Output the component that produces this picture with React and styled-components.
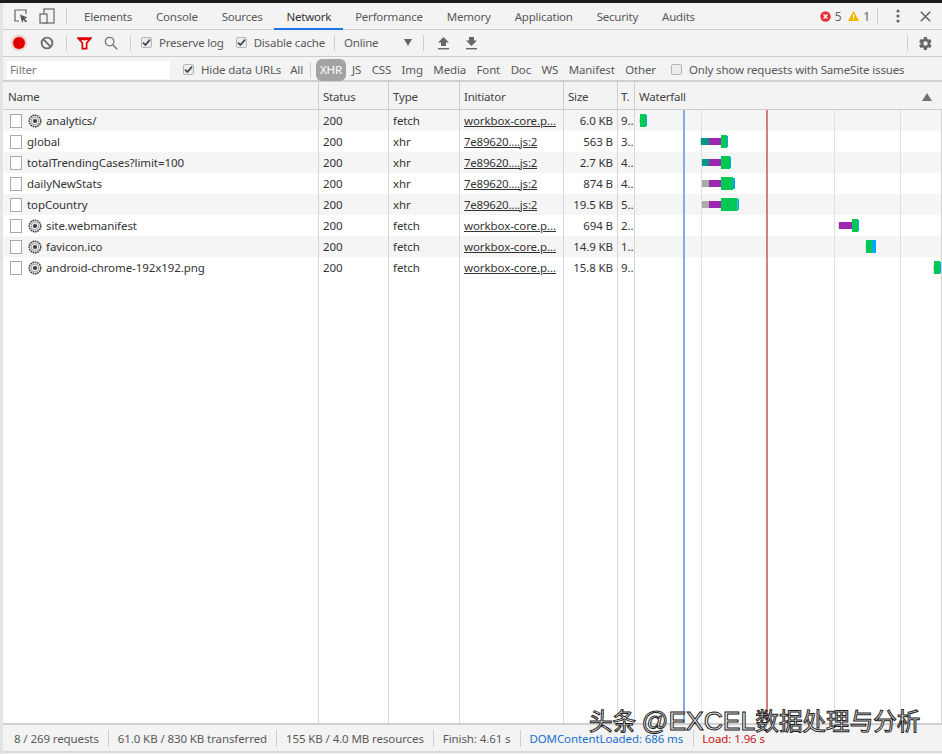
import styled, { createGlobalStyle } from "styled-components";

const GlobalStyle = createGlobalStyle`
  html, body {
    margin: 0;
    padding: 0;
    background: #fff;
  }
  * {
    box-sizing: border-box;
  }
`;

const COLUMNS = "316px 70px 71px 104px 54px 17px 1fr";

const TABS = [
  "Elements",
  "Console",
  "Sources",
  "Network",
  "Performance",
  "Memory",
  "Application",
  "Security",
  "Audits",
];

const TYPE_FILTERS = ["JS", "CSS", "Img", "Media", "Font", "Doc", "WS", "Manifest", "Other"];

const CORE = "workbox-core.p...";
const CHUNK = "7e89620....js:2";

const GREEN = "#00c853";
const BLUE = "#00a6ff";
const PURPLE = "#9c27b0";
const TEAL = "#009688";
const GRAY = "#aaaaaa";
const STUB = "#d8d8d8";

// x positions relative to the waterfall column, from the reference
const REQUESTS = [
  {
    name: "analytics/",
    worker: true,
    status: "200",
    type: "fetch",
    initiator: CORE,
    size: "6.0 KB",
    time: "9",
    bars: [
      [4, 1, STUB, 4],
      [5, 6, GREEN, 13],
      [11, 1, BLUE, 11],
    ],
  },
  {
    name: "global",
    status: "200",
    type: "xhr",
    initiator: CHUNK,
    size: "563 B",
    time: "3",
    bars: [
      [65, 1, STUB, 6],
      [66, 8, TEAL, 7],
      [74, 12, PURPLE, 7],
      [86, 6, GREEN, 13],
      [92, 1, BLUE, 11],
    ],
  },
  {
    name: "totalTrendingCases?limit=100",
    status: "200",
    type: "xhr",
    initiator: CHUNK,
    size: "2.7 KB",
    time: "4",
    bars: [
      [66, 1, STUB, 6],
      [67, 7, TEAL, 7],
      [74, 12, PURPLE, 7],
      [86, 9, GREEN, 13],
      [95, 1, BLUE, 11],
    ],
  },
  {
    name: "dailyNewStats",
    status: "200",
    type: "xhr",
    initiator: CHUNK,
    size: "874 B",
    time: "4",
    bars: [
      [66, 1, STUB, 6],
      [67, 7, GRAY, 7],
      [74, 12, PURPLE, 7],
      [86, 12, GREEN, 13],
      [98, 2, BLUE, 11],
    ],
  },
  {
    name: "topCountry",
    status: "200",
    type: "xhr",
    initiator: CHUNK,
    size: "19.5 KB",
    time: "5",
    bars: [
      [66, 1, STUB, 6],
      [67, 7, GRAY, 7],
      [74, 12, PURPLE, 7],
      [86, 16.5, GREEN, 13],
      [102.5, 1.5, BLUE, 11],
    ],
  },
  {
    name: "site.webmanifest",
    worker: true,
    status: "200",
    type: "fetch",
    initiator: CORE,
    size: "694 B",
    time: "2",
    bars: [
      [203, 1, STUB, 6],
      [204, 13, PURPLE, 7],
      [217, 6, GREEN, 13],
      [223, 1, BLUE, 11],
    ],
  },
  {
    name: "favicon.ico",
    worker: true,
    status: "200",
    type: "fetch",
    initiator: CORE,
    size: "14.9 KB",
    time: "1",
    bars: [
      [230, 1, STUB, 6],
      [231, 6, GREEN, 13],
      [237, 4, BLUE, 13],
    ],
  },
  {
    name: "android-chrome-192x192.png",
    worker: true,
    status: "200",
    type: "fetch",
    initiator: CORE,
    size: "15.8 KB",
    time: "9",
    bars: [
      [298, 1, STUB, 6],
      [299, 6, GREEN, 13],
      [305, 1, BLUE, 11],
    ],
  },
];

const InspectIcon = () => (
  <svg width="16" height="16" viewBox="0 0 16 16">
    <path d="M6 13H2V2h11v4" fill="none" stroke="#666" strokeWidth="1.2" />
    <path d="M7 6.5l7.5 3-3 1.2 2.6 2.6-1.2 1.2-2.6-2.6L9.2 15z" fill="#555" />
  </svg>
);

const DeviceIcon = () => (
  <svg width="16" height="16" viewBox="0 0 16 16">
    <rect x="5" y="1" width="10" height="14" fill="none" stroke="#666" strokeWidth="1.2" />
    <rect x="1" y="6" width="7" height="9" fill="#f3f3f3" stroke="#666" strokeWidth="1.2" />
  </svg>
);

const RecordIcon = () => (
  <svg width="18" height="18" viewBox="0 0 18 18">
    <circle cx="9" cy="9" r="8" fill="#e53935" opacity="0.22" />
    <circle cx="9" cy="9" r="6" fill="#e00000" />
  </svg>
);

const ClearIcon = () => (
  <svg width="14" height="14" viewBox="0 0 14 14">
    <circle cx="7" cy="7" r="5.4" fill="none" stroke="#6e6e6e" strokeWidth="1.9" />
    <path d="M3.2 3.2l7.6 7.6" stroke="#6e6e6e" strokeWidth="1.9" />
  </svg>
);

const FilterIcon = () => (
  <svg width="15" height="13" viewBox="0 0 15 13">
    <path d="M1 1h13L9.6 6v5.6H5.4V6z" fill="#fff" stroke="#e00000" strokeWidth="1.7" />
    <path d="M1 1h13l-2 2.3H3z" fill="#e00000" />
  </svg>
);

const SearchIcon = () => (
  <svg width="14" height="14" viewBox="0 0 14 14">
    <circle cx="5.6" cy="5.6" r="4.3" fill="none" stroke="#777" strokeWidth="1.3" />
    <path d="M8.8 8.8l4.4 4.4" stroke="#777" strokeWidth="1.6" />
  </svg>
);

const Caret = () => (
  <svg width="8" height="7" viewBox="0 0 8 7">
    <path d="M0 0h8L4 7z" fill="#666" />
  </svg>
);

const SortCaret = () => (
  <svg width="10" height="8" viewBox="0 0 10 8">
    <path d="M0 8h10L5 0z" fill="#707070" />
  </svg>
);

const UploadIcon = () => (
  <svg width="11" height="13" viewBox="0 0 11 13">
    <path d="M5.5 0L11 5.5H8V9H3V5.5H0z" fill="#666" />
    <rect y="11" width="11" height="1.4" fill="#666" />
  </svg>
);

const DownloadIcon = () => (
  <svg width="11" height="13" viewBox="0 0 11 13">
    <path d="M3 0h5v3.5h3L5.5 9 0 3.5h3z" fill="#666" />
    <rect y="11" width="11" height="1.4" fill="#666" />
  </svg>
);

const GearIcon = () => (
  <svg width="15" height="15" viewBox="0 0 24 24">
    <path
      fill="#666"
      d="M19.4 13c.04-.33.06-.66.06-1s-.02-.67-.07-1l2.16-1.68a.5.5 0 0 0 .12-.64l-2.05-3.55a.5.5 0 0 0-.62-.22l-2.55 1.03a7.5 7.5 0 0 0-1.73-1L14.33 2.2a.5.5 0 0 0-.5-.42H9.74a.5.5 0 0 0-.5.42l-.39 2.72c-.62.25-1.2.6-1.73 1L4.57 4.9a.5.5 0 0 0-.62.22L1.9 8.68a.5.5 0 0 0 .12.64L4.18 11a7.9 7.9 0 0 0 0 2l-2.16 1.68a.5.5 0 0 0-.12.64l2.05 3.55c.13.22.39.31.62.22l2.55-1.03c.53.4 1.11.75 1.73 1l.39 2.72c.04.24.25.42.5.42h4.09c.25 0 .46-.18.5-.42l.39-2.72a7.5 7.5 0 0 0 1.73-1l2.55 1.03c.23.09.49 0 .62-.22l2.05-3.55a.5.5 0 0 0-.12-.64zM12 15.5a3.5 3.5 0 1 1 0-7 3.5 3.5 0 0 1 0 7z"
    />
  </svg>
);

const ErrorIcon = () => (
  <svg width="11" height="11" viewBox="0 0 11 11">
    <circle cx="5.5" cy="5.5" r="5.2" fill="#e8303a" />
    <path d="M3.6 3.6l3.8 3.8M7.4 3.6L3.6 7.4" stroke="#fff" strokeWidth="1.4" />
  </svg>
);

const WarningIcon = () => (
  <svg width="11" height="10" viewBox="0 0 11 10">
    <path d="M5.5 0L11 10H0z" fill="#f4b400" />
    <rect x="5" y="3.4" width="1" height="3.4" fill="#fff" />
    <rect x="5" y="7.6" width="1" height="1" fill="#fff" />
  </svg>
);

const MoreIcon = () => (
  <svg width="4" height="14" viewBox="0 0 4 14">
    <circle cx="2" cy="2" r="1.6" fill="#666" />
    <circle cx="2" cy="7" r="1.6" fill="#666" />
    <circle cx="2" cy="12" r="1.6" fill="#666" />
  </svg>
);

const CloseIcon = () => (
  <svg width="11" height="11" viewBox="0 0 11 11">
    <path d="M.8.8l9.4 9.4M10.2.8L.8 10.2" stroke="#666" strokeWidth="1.6" />
  </svg>
);

const FileIcon = () => (
  <svg width="12" height="14" viewBox="0 0 12 14">
    <rect x="0.5" y="0.5" width="11" height="13" fill="#fff" stroke="#a9a9a9" />
  </svg>
);

const WorkerIcon = () => (
  <WorkerSvg width="14" height="14" viewBox="0 0 14 14">
    <circle cx="7" cy="7" r="5.8" fill="#ededed" stroke="#3c3c3c" strokeWidth="1.5" strokeDasharray="1.7 0.7" />
    <circle cx="7" cy="7" r="3.9" fill="none" stroke="#999" strokeWidth="0.9" />
    <circle cx="7" cy="7" r="2.1" fill="#3c3c3c" />
  </WorkerSvg>
);

function Checkbox({ checked }) {
  return (
    <CheckBoxFrame>
      {checked && (
        <svg width="9" height="9" viewBox="0 0 9 9">
          <path d="M1 4.6l2.4 2.4L8 1.6" fill="none" stroke="#444" strokeWidth="1.7" />
        </svg>
      )}
    </CheckBoxFrame>
  );
}

function Waterfall() {
  return (
    <WaterfallChart width="307" height="613" viewBox="0 0 307 613">
      {[66, 199, 265].map((x) => (
        <rect key={x} x={x} y="0" width="1" height="613" fill="#e0e0e0" />
      ))}
      <rect x="306" y="0" width="1" height="613" fill="#d0d0d0" />
      <rect x="48" y="0" width="2" height="613" fill="#7eaee2" />
      <rect x="131" y="0" width="2" height="613" fill="#d27f7f" />
      {REQUESTS.map((request, row) =>
        request.bars.map(([x, width, color, height], i) => (
          <rect
            key={i}
            x={x}
            y={row * 21 + 10.5 - height / 2}
            width={width}
            height={height}
            fill={color}
          />
        ))
      )}
    </WaterfallChart>
  );
}

export default function App() {
  return (
    <>
      <GlobalStyle />
      <Page>
        <TopEdge />
        <TabBar>
          <ToolIcons>
            <InspectIcon />
            <DeviceIcon />
          </ToolIcons>
          <BarDivider />
          <Tabs>
            {TABS.map((tab) => (
              <Tab key={tab} $active={tab === "Network"}>
                {tab}
              </Tab>
            ))}
          </Tabs>
          <Issues>
            <ErrorIcon />
            <IssueCount>5</IssueCount>
            <WarningIcon />
            <IssueCount>1</IssueCount>
          </Issues>
          <BarDivider />
          <MoreButton>
            <MoreIcon />
          </MoreButton>
          <CloseButton>
            <CloseIcon />
          </CloseButton>
        </TabBar>

        <Toolbar>
          <RecordButton>
            <RecordIcon />
          </RecordButton>
          <ClearButton>
            <ClearIcon />
          </ClearButton>
          <ToolDivider />
          <FilterButton>
            <FilterIcon />
          </FilterButton>
          <SearchButton>
            <SearchIcon />
          </SearchButton>
          <ToolDivider />
          <ToolbarCheck>
            <Checkbox checked />
            Preserve log
          </ToolbarCheck>
          <ToolbarCheck $tail>
            <Checkbox checked />
            Disable cache
          </ToolbarCheck>
          <ToolDivider />
          <Throttle>
            Online
            <Caret />
          </Throttle>
          <ToolDivider />
          <HarGroup>
            <HarButton>
              <UploadIcon />
            </HarButton>
            <HarButton>
              <DownloadIcon />
            </HarButton>
          </HarGroup>
          <SettingsGroup>
            <ToolDivider />
            <SettingsButton>
              <GearIcon />
            </SettingsButton>
          </SettingsGroup>
        </Toolbar>

        <FilterBar>
          <FilterInput>Filter</FilterInput>
          <CheckLabel>
            <Checkbox checked />
            Hide data URLs
          </CheckLabel>
          <TypeAll>All</TypeAll>
          <ToolDivider />
          <TypePill>XHR</TypePill>
          <TypeFilters>
            {TYPE_FILTERS.map((filter) => (
              <span key={filter}>{filter}</span>
            ))}
          </TypeFilters>
          <SameSiteLabel>
            <Checkbox />
            Only show requests with SameSite issues
          </SameSiteLabel>
        </FilterBar>

        <Table>
          <HeaderRow>
            <HeaderCell>Name</HeaderCell>
            <HeaderCell>Status</HeaderCell>
            <HeaderCell>Type</HeaderCell>
            <HeaderCell>Initiator</HeaderCell>
            <HeaderCell>Size</HeaderCell>
            <HeaderCell $tight>T.</HeaderCell>
            <WaterfallHeader>
              Waterfall
              <SortCaret />
            </WaterfallHeader>
          </HeaderRow>
          <TableBody>
            {REQUESTS.map((request) => (
              <Row key={request.name}>
                <NameCell>
                  <FileIcon />
                  {request.worker && <WorkerIcon />}
                  <span>{request.name}</span>
                </NameCell>
                <Cell>{request.status}</Cell>
                <Cell>{request.type}</Cell>
                <InitiatorCell $tight={request.initiator === CHUNK}>{request.initiator}</InitiatorCell>
                <SizeCell>{request.size}</SizeCell>
                <TimeCell>{request.time}..</TimeCell>
                <Cell />
              </Row>
            ))}
            <ColumnLines>
              <i />
              <i />
              <i />
              <i />
              <i />
              <i />
              <i />
            </ColumnLines>
            <Waterfall />
          </TableBody>
        </Table>

        <StatusBar>
          <StatusItem>8 / 269 requests</StatusItem>
          <StatusItem>61.0 KB / 830 KB transferred</StatusItem>
          <StatusItem>155 KB / 4.0 MB resources</StatusItem>
          <StatusItem>Finish: 4.61 s</StatusItem>
          <StatusItem $color="#1a6fd0">DOMContentLoaded: 686 ms</StatusItem>
          <StatusItem $color="#c41a16" $last>
            Load: 1.96 s
          </StatusItem>
        </StatusBar>
        <BottomEdge />
        <Watermark>
          头条 <WatermarkLatin>@EXCEL</WatermarkLatin>数据处理与分析
        </Watermark>
      </Page>
    </>
  );
}

const Page = styled.div`
  position: relative;
  display: flex;
  flex-direction: column;
  width: 942px;
  height: 754px;
  overflow: hidden;
  padding-left: 3px;
  background: #e4e4e4;
  color: #444;
  font-family: "Noto Sans", "Open Sans", sans-serif;
  font-size: 11.5px;
  letter-spacing: -0.2px;
`;

const TopEdge = styled.div`
  flex: none;
  height: 3px;
  margin-left: -3px;
  background: #1c1c1c;
`;

const TabBar = styled.div`
  flex: none;
  display: flex;
  align-items: center;
  height: 27px;
  padding-right: 11px;
  background: #f3f3f3;
  border-bottom: 1px solid #cdcdcd;
`;

const ToolIcons = styled.div`
  display: flex;
  align-items: center;
  gap: 10px;
  padding-left: 10px;
  padding-right: 11px;
`;

const BarDivider = styled.div`
  width: 1px;
  height: 16px;
  background: #cfcfcf;
`;

const Tabs = styled.div`
  display: flex;
  height: 100%;
  margin-left: 5px;
`;

const Tab = styled.div`
  display: flex;
  align-items: center;
  padding: 1px 12px 0;
  color: ${({ $active }) => ($active ? "#333" : "#5a5a5a")};
  letter-spacing: -0.23px;
  border-bottom: 2px solid ${({ $active }) => ($active ? "#1a73e8" : "transparent")};
  margin-bottom: -1px;
`;

const Issues = styled.div`
  display: flex;
  align-items: center;
  margin-left: auto;
  color: #666;
  font-size: 12px;
`;

const IssueCount = styled.span`
  margin: 0 7px 0 4px;
`;

const MoreButton = styled.div`
  display: flex;
  margin-left: 18px;
`;

const CloseButton = styled.div`
  display: flex;
  margin-left: 20px;
`;

const Toolbar = styled.div`
  flex: none;
  display: flex;
  align-items: center;
  height: 27px;
  padding-left: 7px;
  padding-right: 9px;
  background: #f3f3f3;
  border-bottom: 1px solid #cdcdcd;
`;

const RecordButton = styled.div`
  display: flex;
`;

const ClearButton = styled.div`
  display: flex;
  margin-left: 12px;
  margin-right: 3px;
`;

const ToolDivider = styled.div`
  flex: none;
  width: 1px;
  height: 16px;
  margin: 0 9px;
  background: #cfcfcf;
`;

const FilterButton = styled.div`
  display: flex;
  margin-left: 1px;
`;

const SearchButton = styled.div`
  display: flex;
  margin-left: 12px;
  margin-right: 3px;
`;

const CheckLabel = styled.div`
  display: flex;
  align-items: center;
  gap: 7px;
  margin-left: 1px;
  margin-right: 11px;
  color: #5a5a5a;
  white-space: nowrap;
`;

const ToolbarCheck = styled(CheckLabel)`
  margin-bottom: 2px;
  margin-right: ${({ $tail }) => ($tail ? "0" : "11px")};
`;

const CheckBoxFrame = styled.div`
  flex: none;
  display: flex;
  align-items: center;
  justify-content: center;
  width: 11px;
  height: 11px;
  border: 1px solid #b5b5b5;
  border-radius: 2px;
  background: #ececec;
`;

const Throttle = styled.div`
  display: flex;
  align-items: center;
  justify-content: space-between;
  width: 68px;
  margin-right: 2px;
  margin-bottom: 2px;
  color: #5a5a5a;
`;

const HarGroup = styled.div`
  display: flex;
  padding-left: 2px;
`;

const HarButton = styled.div`
  display: flex;
  margin: 0 8px 0 3px;
  width: 17px;
`;

const SettingsGroup = styled.div`
  display: flex;
  align-items: center;
  margin-left: auto;
`;

const SettingsButton = styled.div`
  display: flex;
  margin-left: 1px;
`;

const FilterBar = styled.div`
  flex: none;
  display: flex;
  align-items: center;
  height: 25px;
  background: #f3f3f3;
  padding-left: 4px;
  padding-top: 2px;
  border-bottom: 2px solid #d0d0d0;
  color: #5a5a5a;
  letter-spacing: -0.15px;
`;

const FilterInput = styled.div`
  flex: none;
  width: 163px;
  height: 18px;
  line-height: 18px;
  margin-right: 12px;
  padding-left: 3px;
  background: #fff;
  color: #777;
`;

const TypeAll = styled.span`
  margin-left: -2px;
  margin-right: -2px;
`;

const TypePill = styled.div`
  height: 22px;
  line-height: 22px;
  margin-left: -4px;
  padding: 0 4px;
  border-radius: 6px;
  background: #a3a3a3;
  color: #fff;
`;

const TypeFilters = styled.div`
  display: flex;
  gap: 10.5px;
  margin-left: 6px;
  white-space: nowrap;
`;

const SameSiteLabel = styled(CheckLabel)`
  margin-left: 15px;
  margin-right: 0;
`;

const Table = styled.div`
  flex: 1;
  display: flex;
  flex-direction: column;
  min-height: 0;
  background: #fff;
`;

const HeaderRow = styled.div`
  flex: none;
  display: grid;
  grid-template-columns: ${COLUMNS};
  height: 28px;
  background: #f3f3f3;
  border-bottom: 1px solid #cdcdcd;
`;

const HeaderCell = styled.div`
  display: flex;
  align-items: center;
  padding-top: 2px;
  padding-left: ${({ $tight }) => ($tight ? "3px" : "4px")};
  border-right: 1px solid #cdcdcd;
  color: #444;
  white-space: nowrap;
  &:first-child {
    padding-left: 5px;
  }
`;

const WaterfallHeader = styled(HeaderCell)`
  justify-content: space-between;
  padding-right: 10px;
  border-right: 0;
`;

const TableBody = styled.div`
  position: relative;
  flex: 1;
  min-height: 0;
`;

const Row = styled.div`
  display: grid;
  grid-template-columns: ${COLUMNS};
  height: 21px;
  align-items: center;
  color: #333;
  letter-spacing: -0.08px;
  &:nth-child(odd) {
    background: #f5f5f5;
  }
`;

const Cell = styled.div`
  padding-left: 4px;
  white-space: nowrap;
  overflow: hidden;
`;

const NameCell = styled(Cell)`
  display: flex;
  align-items: center;
  gap: 5px;
  padding-left: 7px;
`;

const WorkerSvg = styled.svg`
  flex: none;
  margin-left: 1px;
  margin-right: -1px;
`;

const InitiatorCell = styled(Cell)`
  text-decoration: underline;
  letter-spacing: ${({ $tight }) => ($tight ? "-0.22px" : "-0.08px")};
`;

const SizeCell = styled(Cell)`
  padding-right: 5px;
  text-align: right;
`;

const TimeCell = styled(Cell)`
  padding-left: 3px;
`;

const ColumnLines = styled.div`
  position: absolute;
  inset: 0;
  display: grid;
  grid-template-columns: ${COLUMNS};
  pointer-events: none;
  i {
    border-right: 1px solid #d6d6d6;
  }
  i:last-child {
    border-right: 0;
  }
`;

const WaterfallChart = styled.svg`
  position: absolute;
  top: 0;
  left: 632px;
`;

const StatusBar = styled.div`
  flex: none;
  display: flex;
  align-items: center;
  height: 28px;
  padding-left: 2.5px;
  background: #f3f3f3;
  border-top: 2px solid #d0d0d0;
  white-space: nowrap;
  letter-spacing: -0.1px;
`;

const StatusItem = styled.div`
  padding: 2px 9.5px 2px 8.5px;
  line-height: 13px;
  color: ${({ $color }) => $color || "#5a5a5a"};
  border-right: ${({ $last }) => ($last ? "0" : "1px solid #cfcfcf")};
`;

const BottomEdge = styled.div`
  flex: none;
  height: 3px;
  background: #f3f3f3;
  border-top: 2px solid #d8d8d8;
`;

const Watermark = styled.div`
  position: absolute;
  left: 589px;
  top: 708.5px;
  color: #f4f4f4;
  font-family: "Noto Sans CJK SC", "Noto Sans", sans-serif;
  font-size: 23.6px;
  line-height: 23px;
  height: 23px;
  letter-spacing: 0;
  white-space: nowrap;
  -webkit-text-stroke: 1px #222;
`;

const WatermarkLatin = styled.span`
  font-family: "Liberation Sans", sans-serif;
  font-size: 26.5px;
  line-height: 23px;
`;
